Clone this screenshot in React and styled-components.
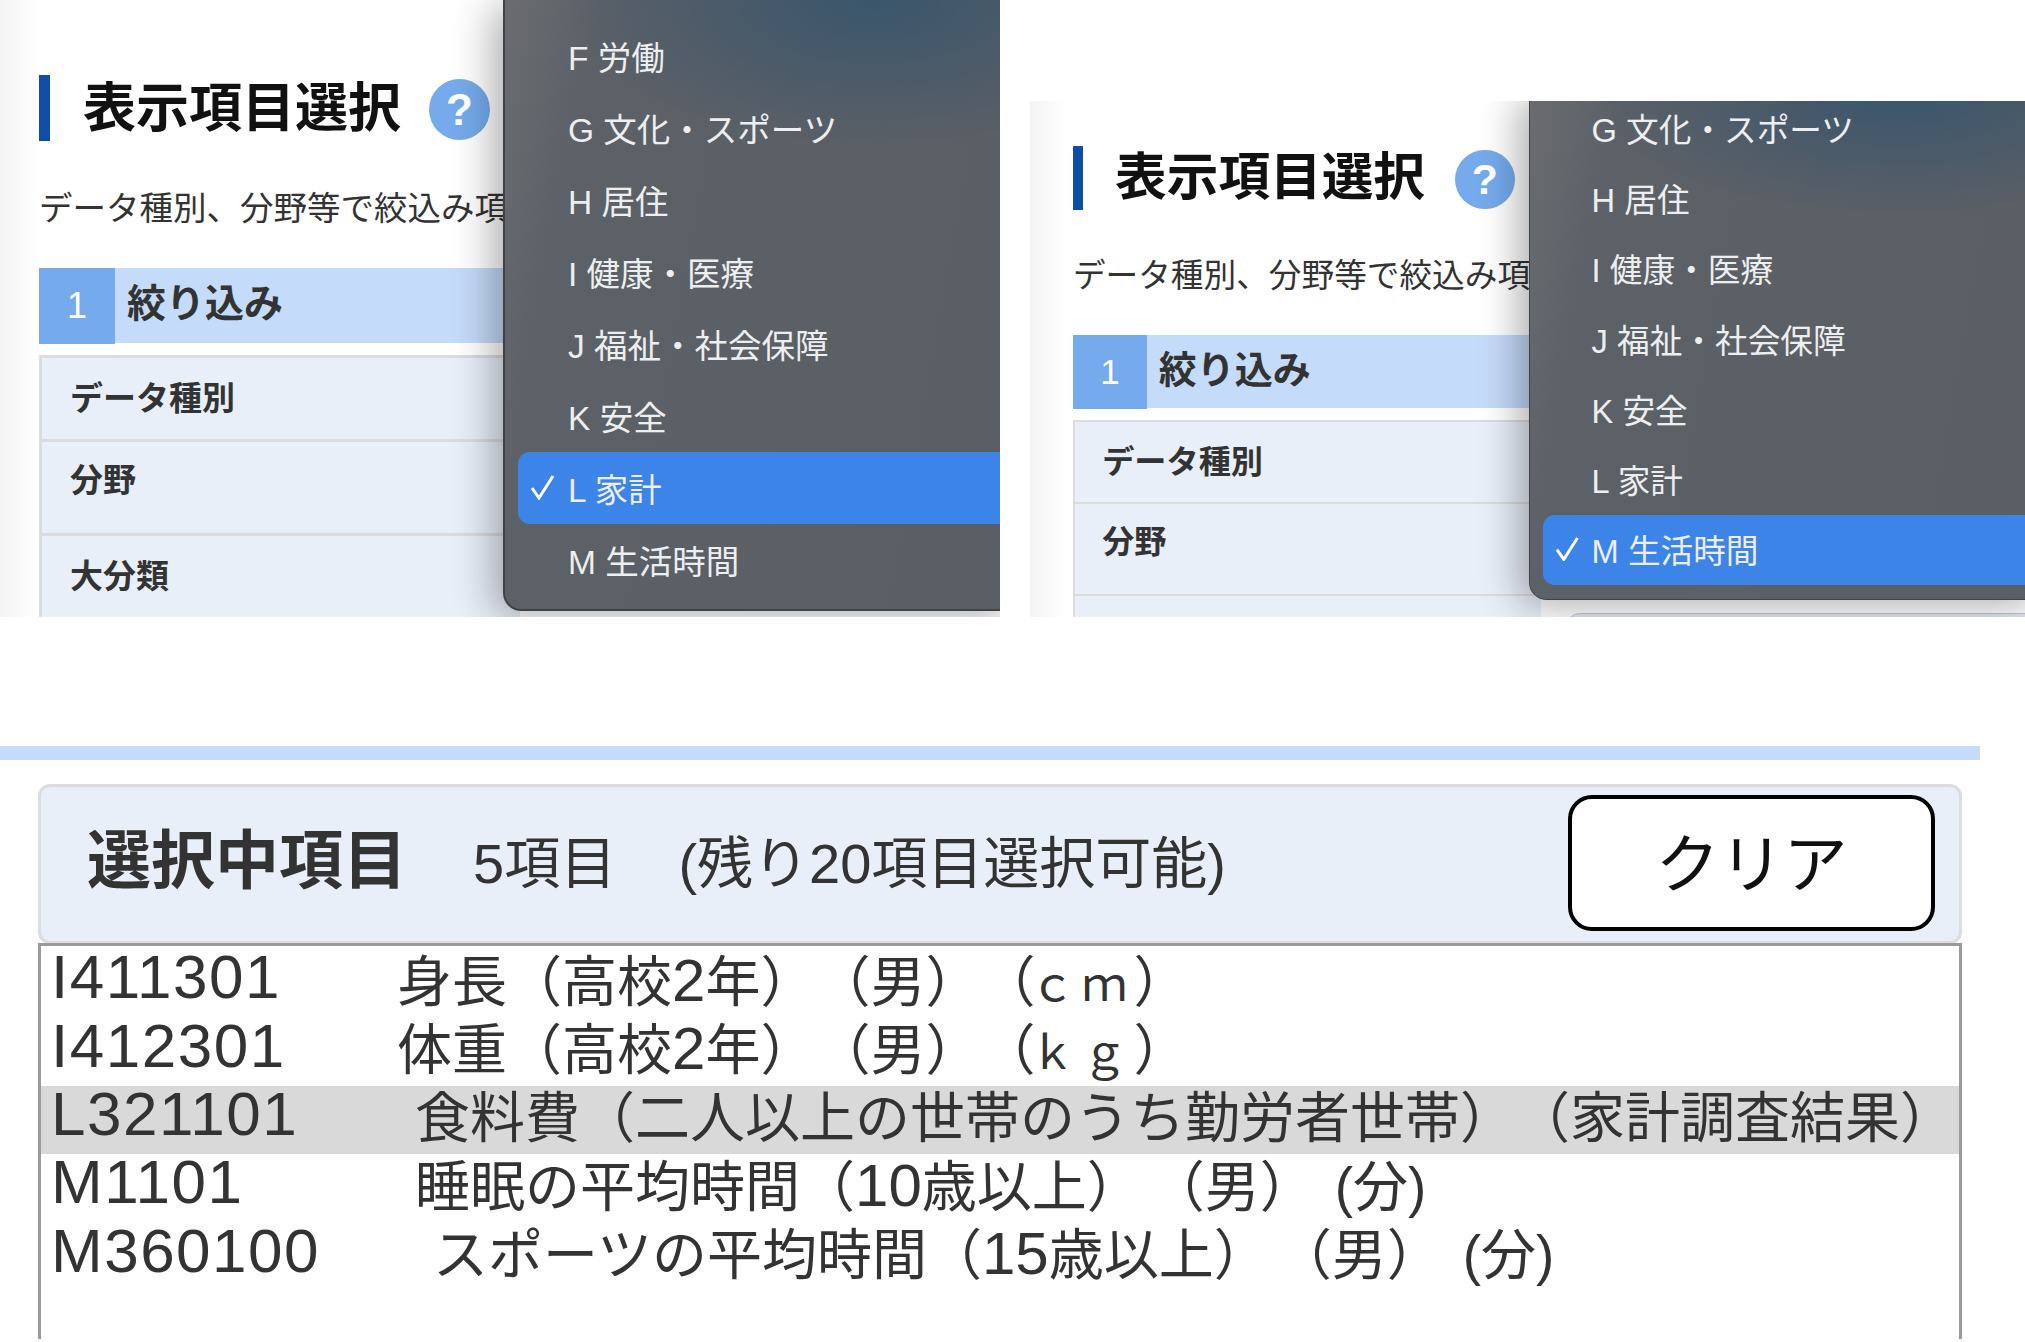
import styled, { createGlobalStyle } from 'styled-components';

const GlobalStyle = createGlobalStyle`
    html, body {
        margin: 0;
        padding: 0;
        background: #fff;
    }
    body {
        font-family: "Liberation Sans", "Noto Sans CJK JP", sans-serif;
        color: #333;
    }
`

const colors = {
    paleBlue: '#c4dbf9',
    midBlue: '#75aaec',
    navy: '#0f4da6',
    cell: '#e8eff9',
    line: '#dcdcdc',
    selected: '#3d84e8',
}

const Page = styled.div`
    width: 2025px;
    height: 1342px;
    overflow: hidden;
`
const Shots = styled.div`
    display: flex;
    align-items: flex-end;
    gap: 30px;
    height: 617px;
`
const Shot = styled.section`
    position: relative;
    overflow: hidden;
    flex: none;
    box-sizing: border-box;
    zoom: ${(props) => props.$zoom};
    width: ${(props) => props.$width}px;
    height: ${(props) => props.$height}px;
    padding: ${(props) => props.$top}px 0 0 ${(props) => props.$left}px;
    background: linear-gradient(to right, #f4f4f4, #fff 38px);
`
const Heading = styled.div`
    display: flex;
    align-items: center;
    height: 66px;
    border-left: 11px solid ${colors.navy};
    box-sizing: border-box;
    padding-left: 33px;
    gap: ${(props) => props.$gap}px;
`
const HeadingText = styled.h1`
    margin: 0;
    font-size: 53px;
    font-weight: 700;
    color: #111;
    line-height: 1;
`
const Help = styled.span`
    width: 61px;
    height: 61px;
    border-radius: 50%;
    background: ${colors.midBlue};
    color: #fff;
    font-size: 44px;
    font-weight: 700;
    display: flex;
    align-items: center;
    justify-content: center;
    margin-top: 3px;
`
const Desc = styled.p`
    margin: 44px 0 0;
    font-size: 33.5px;
    line-height: 48px;
    height: 48px;
    white-space: nowrap;
    color: #333;
`
const Step = styled.div`
    display: flex;
    height: 75px;
    margin-top: ${(props) => props.$gap}px;
    background: ${colors.paleBlue};
    width: 700px;
`
const StepNum = styled.span`
    width: 76px;
    height: 76px;
    background: ${colors.midBlue};
    color: #fff;
    font-size: 36px;
    display: flex;
    align-items: center;
    justify-content: center;
`
const StepLabel = styled.span`
    font-size: 39px;
    font-weight: 700;
    line-height: 72px;
    margin-left: 12px;
`
const Table = styled.div`
    width: 478px;
    margin-top: 12px;
    border: solid ${colors.line};
    border-width: 3px 0 0 3px;
`
const TableRow = styled.div`
    height: ${(props) => props.$height}px;
    box-sizing: border-box;
    background: ${colors.cell};
    border-bottom: 3px solid ${colors.line};
    padding: ${(props) => props.$pad}px 0 0 28px;
    font-size: 33px;
    font-weight: 700;
    line-height: 46px;
`
const Menu = styled.div`
    position: absolute;
    top: ${(props) => props.$top}px;
    left: ${(props) => props.$left}px;
    right: -20px;
    box-sizing: border-box;
    padding: ${(props) => props.$padTop}px 0 ${(props) => props.$padBottom}px 0;
    background:
        radial-gradient(ellipse 60% 24% at 72% 0, #3a566c 0, rgba(58, 86, 108, 0) 100%),
        linear-gradient(100deg, #6a6c70 0, #5c6067 16%, #5a5e65 100%);
    border: 2px solid #3f4348;
    border-top: none;
    border-radius: 0 0 18px 18px;
    box-shadow: -10px 6px 40px rgba(0, 0, 0, 0.32);
`
const MenuItem = styled.div`
    display: flex;
    align-items: center;
    box-sizing: border-box;
    height: 72px;
    margin-left: 13px;
    padding-bottom: 2px;
    border-radius: 12px 0 0 12px;
    background: ${(props) => props.$active ? colors.selected : 'transparent'};
    color: #eceef0;
    font-size: 33.5px;
    white-space: nowrap;
`
const CheckSlot = styled.span`
    width: 50px;
    flex: none;
    display: flex;
    justify-content: center;
    box-sizing: border-box;
`
const FieldEdge = styled.div`
    position: absolute;
    left: 550px;
    top: 525px;
    right: -20px;
    height: 30px;
    border: 2px solid #b7c7e0;
    border-radius: 14px 0 0 0;
    background: #e3e6ec;
`
const Rule = styled.div`
    width: 1980px;
    height: 14px;
    margin-top: 129px;
    background: ${colors.paleBlue};
`
const Selected = styled.section`
    margin: 24px 0 0 38px;
    width: 1924px;
`
const SelectedHead = styled.header`
    box-sizing: border-box;
    height: 160px;
    display: flex;
    align-items: center;
    padding: 0 24px 0 46px;
    background: ${colors.cell};
    border: 3px solid ${colors.line};
    border-radius: 12px;
`
const SelectedTitle = styled.h2`
    margin: 0 0 18px;
    font-size: 64px;
    font-weight: 700;
    color: #333;
`
const Count = styled.span`
    margin: 0 0 12px 66px;
    font-size: 56px;
    color: #333;
    white-space: pre;
`
const ClearButton = styled.button`
    margin: 0 0 2px auto;
    width: 367px;
    height: 136px;
    box-sizing: border-box;
    border: 4px solid #000;
    border-radius: 24px;
    background: #fff;
    color: #111;
    font-family: inherit;
    font-size: 64px;
    padding: 0 0 8px;
`
const List = styled.div`
    box-sizing: border-box;
    height: 396px;
    padding-top: 3px;
    border: solid #9a9a9a;
    border-width: 3px 3px 0 3px;
    margin-top: -1px;
`
const ListRow = styled.div`
    display: flex;
    align-items: center;
    box-sizing: border-box;
    height: 68.4px;
    padding: 0 0 13px 10px;
    font-size: 55px;
    white-space: pre;
    text-spacing-trim: space-all;
    color: #333;
    background: ${(props) => props.$active ? '#d9d9d9' : 'transparent'};
`
const Code = styled.span`
    flex: none;
    width: ${(props) => props.$width}px;
    font-size: 62px;
    letter-spacing: 1.5px;
`
const Latin = styled.span`
    font-size: 60px;
`
const Unit = styled.span`
    font-size: 46px;
    letter-spacing: 6px;
    margin-left: -6px;
`
const Gap = styled.span`
    display: inline-block;
    width: ${(props) => props.$width}px;
`

const Check = () => (
    <svg width="26" height="26" viewBox="0 0 26 26" fill="none" stroke="#fff" strokeWidth="3">
        <path d="M2 14 L9 24 L23 2" />
    </svg>
)

const firstMenu = ['F 労働', 'G 文化・スポーツ', 'H 居住', 'I 健康・医療', 'J 福祉・社会保障', 'K 安全', 'L 家計', 'M 生活時間']
const secondMenu = firstMenu.slice(1)

function SelectShot({ zoom, width, height, top, left, titleGap, stepGap, rows, menu, active, menuTop, menuLeft, menuPad, menuBottom, edge }) {
    return (
        <Shot $zoom={zoom} $width={width} $height={height} $top={top} $left={left}>
            <Heading $gap={titleGap}>
                <HeadingText>表示項目選択</HeadingText>
                <Help>?</Help>
            </Heading>
            <Desc>データ種別、分野等で絞込み項</Desc>
            <Step $gap={stepGap}>
                <StepNum>1</StepNum>
                <StepLabel>絞り込み</StepLabel>
            </Step>
            <Table>
                {rows.map((row) => (
                    <TableRow key={row.label} $height={row.height} $pad={row.pad}>{row.label}</TableRow>
                ))}
            </Table>
            {edge && <FieldEdge />}
            <Menu $top={menuTop} $left={menuLeft} $padTop={menuPad} $padBottom={menuBottom}>
                {menu.map((item) => (
                    <MenuItem key={item} $active={item === active}>
                        <CheckSlot>{item === active && <Check />}</CheckSlot>
                        {item}
                    </MenuItem>
                ))}
            </Menu>
        </Shot>
    )
}

const rowsA = [
    { label: 'データ種別', height: 84, pad: 18 },
    { label: '分野', height: 94, pad: 16 },
    { label: '大分類', height: 96, pad: 18 },
]
const rowsB = [
    { label: 'データ種別', height: 84, pad: 18 },
    { label: '分野', height: 94, pad: 16 },
    { label: '', height: 40, pad: 0 },
]

function App() {
    return (
        <Page>
            <GlobalStyle />
            <Shots>
                <SelectShot
                    zoom={1}
                    width={1000}
                    height={617}
                    top={75}
                    left={39}
                    titleGap={28}
                    stepGap={35}
                    rows={rowsA}
                    menu={firstMenu}
                    active="L 家計"
                    menuTop={0}
                    menuLeft={503}
                    menuPad={20}
                    menuBottom={13}
                />
                <SelectShot
                    zoom={0.975}
                    width={1021}
                    height={529}
                    top={46}
                    left={44}
                    titleGap={31}
                    stepGap={36}
                    rows={rowsB}
                    menu={secondMenu}
                    active="M 生活時間"
                    menuTop={-8}
                    menuLeft={512}
                    menuPad={0}
                    menuBottom={15}
                    edge
                />
            </Shots>
            <Rule />
            <Selected>
                <SelectedHead>
                    <SelectedTitle>選択中項目</SelectedTitle>
                    <Count>5項目    (残り20項目選択可能)</Count>
                    <ClearButton>クリア</ClearButton>
                </SelectedHead>
                <List>
                    <ListRow>
                        <Code $width={346}>I411301</Code>
                        <span>身長（高校<Latin>2</Latin>年）（男）（<Unit>ｃｍ</Unit>）</span>
                    </ListRow>
                    <ListRow>
                        <Code $width={346}>I412301</Code>
                        <span>体重（高校<Latin>2</Latin>年）（男）（<Unit>ｋｇ</Unit>）</span>
                    </ListRow>
                    <ListRow $active>
                        <Code $width={364}>L321101</Code>
                        <span>食料費（二人以上の世帯のうち勤労者世帯）（家計調査結果）</span>
                    </ListRow>
                    <ListRow>
                        <Code $width={364}>M1101</Code>
                        <span>睡眠の平均時間（<Latin>10</Latin>歳以上）<Gap $width={8} />（男）<Gap $width={20} />(分)</span>
                    </ListRow>
                    <ListRow>
                        <Code $width={382}>M360100</Code>
                        <span>スポーツの平均時間（<Latin>15</Latin>歳以上）<Gap $width={8} />（男）<Gap $width={21} />(分)</span>
                    </ListRow>
                </List>
            </Selected>
        </Page>
    )
}

export default App;
